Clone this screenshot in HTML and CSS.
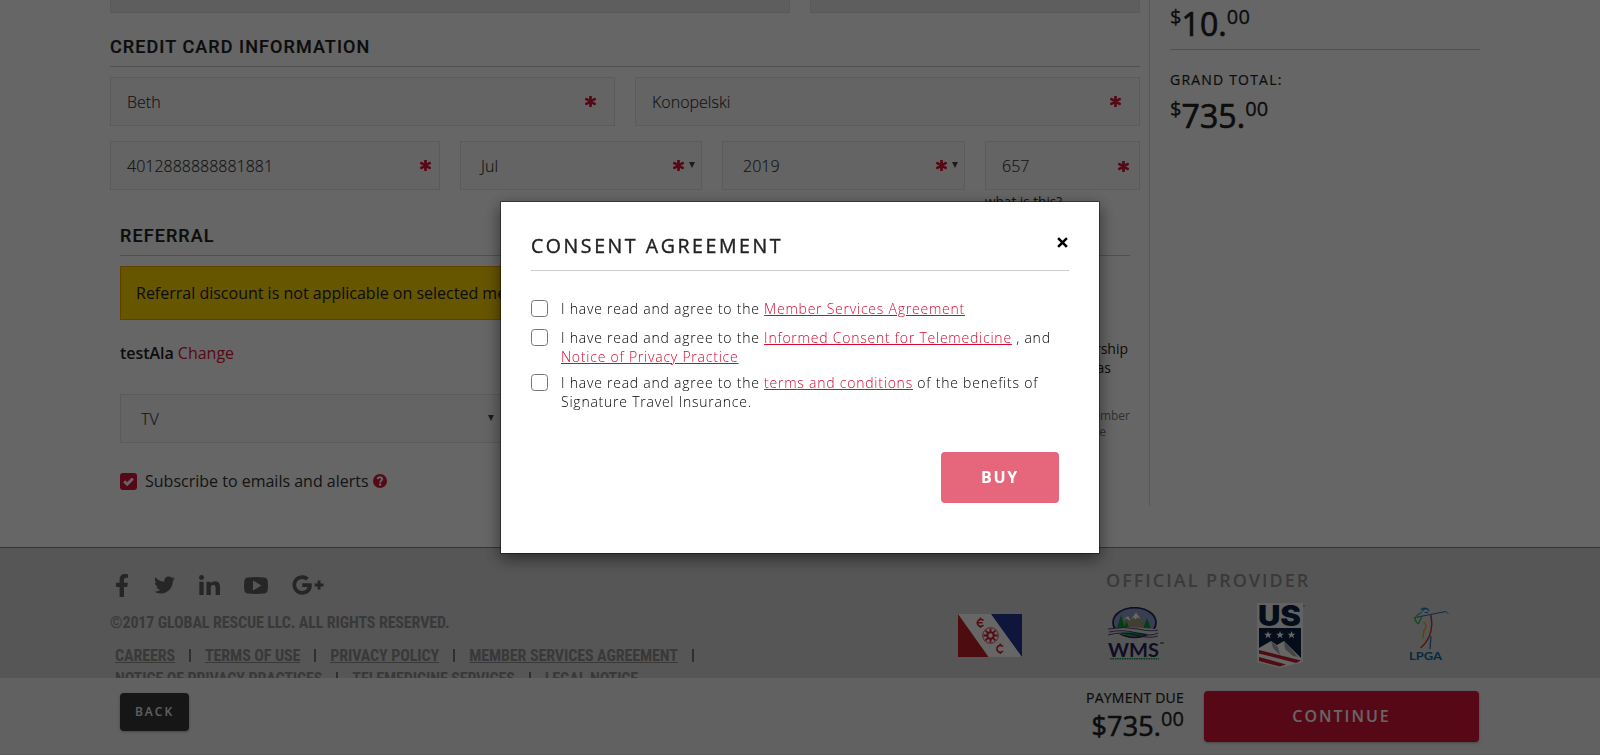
FILE: index.html
```html
<!DOCTYPE html>
<html lang="en">
<head>
<meta charset="utf-8">
<title>Checkout</title>
<link rel="stylesheet" href="styles.css">
</head>
<body>
<svg class="defs" aria-hidden="true">
  <symbol id="ast" viewBox="0 0 12 12"><path d="M6 .8v10.4M1.5 3.4l9 5.2M10.500 3.400l-9 5.200" stroke="currentColor" stroke-width="3" stroke-linecap="round" fill="none"/></symbol>
</svg>
<div class="page">
  <div class="content">
    <main class="main">
      <div class="locked"><div class="lock-a"></div><div class="lock-b"></div></div>
      <h2 class="heading">CREDIT CARD INFORMATION</h2>
      <div class="row names">
        <div class="field"><span>Beth</span><svg class="ast"><use href="#ast"/></svg></div>
        <div class="field"><span>Konopelski</span><svg class="ast"><use href="#ast"/></svg></div>
      </div>
      <div class="row card">
        <div class="field number"><span>4012888888881881</span><svg class="ast"><use href="#ast"/></svg></div>
        <div class="field select"><span>Jul</span><svg class="ast"><use href="#ast"/></svg><i class="arrow"></i></div>
        <div class="field select year"><span>2019</span><svg class="ast"><use href="#ast"/></svg><i class="arrow"></i></div>
        <div class="field cvv"><span>657</span><svg class="ast"><use href="#ast"/></svg></div>
      </div>
      <div class="hint">what is this?</div>
      <section class="referral">
        <h2 class="heading ref-head">REFERRAL</h2>
        <div class="ref-cols">
          <div class="ref-left">
            <div class="alert">Referral discount is not applicable on selected membership.</div>
            <div class="who"><b>testAla</b> <a>Change</a></div>
            <div class="field select source"><span>TV</span><i class="arrow"></i></div>
            <div class="subscribe">
              <svg class="tick" viewBox="0 0 17 17"><rect width="17" height="17" rx="3" fill="#d6153a"/><path d="M4.200 8.300l3 3 5.700-5.800" fill="none" stroke="#fff" stroke-width="2.900"/></svg>
              <span>Subscribe to emails and alerts</span>
              <svg class="help" viewBox="0 0 14 14"><circle cx="7" cy="7" r="7" fill="#d6153a"/><path d="M4.700 5.200C4.900 2.600 9.300 2.700 9.200 5.200 9.100 6.700 7.100 6.700 7.100 8.500" fill="none" stroke="#fff" stroke-width="2"/><rect x="6" y="9.500" width="2.200" height="2.200" fill="#fff"/></svg>
            </div>
          </div>
          <div class="ref-right">
            <p class="note"><span class="n1">membership</span><span class="n2">as</span></p>
            <p class="small"><span>member</span><span class="s2">the</span></p>
          </div>
        </div>
      </section>
    </main>
    <aside class="side">
      <div class="price"><sup>$</sup>10.<sup>00</sup></div>
      <div class="total-label">GRAND TOTAL:</div>
      <div class="price total"><sup>$</sup>735.<sup>00</sup></div>
    </aside>
  </div>
  <footer class="footer">
    <div class="foot-left">
      <div class="social">
        <svg class="fb" viewBox="22 0 275 512" preserveAspectRatio="none"><path d="M279.14 288l14.22-92.66h-88.91v-60.13c0-25.35 12.42-50.06 52.24-50.06h40.42V6.26S260.43 0 225.36 0c-73.22 0-121.08 44.38-121.08 124.72v70.62H22.89V288h81.39v224h100.17V288z"/></svg>
        <svg class="tw" viewBox="0 48 512 416"><path d="M459.37 151.716c.325 4.548.325 9.097.325 13.645 0 138.72-105.583 298.558-298.558 298.558-59.452 0-114.68-17.219-161.137-47.106 8.447.974 16.568 1.299 25.34 1.299 49.055 0 94.213-16.568 130.274-44.832-46.132-.975-84.792-31.188-98.112-72.772 6.498.974 12.995 1.624 19.818 1.624 9.421 0 18.843-1.300 27.614-3.573-48.081-9.747-84.143-51.980-84.143-102.985v-1.299c13.969 7.797 30.214 12.670 47.431 13.319-28.264-18.843-46.781-51.005-46.781-87.391 0-19.492 5.197-37.360 14.294-52.954 51.655 63.675 129.300 105.258 216.365 109.807-1.624-7.797-2.599-15.918-2.599-24.040 0-57.828 46.782-104.934 104.934-104.934 30.213 0 57.502 12.670 76.670 33.137 23.715-4.548 46.456-13.320 66.599-25.340-7.798 24.366-24.366 44.833-46.132 57.827 21.117-2.273 41.584-8.122 60.426-16.243-14.292 20.791-32.161 39.308-52.628 54.253z"/></svg>
        <svg class="li" viewBox="0 0 448 448" preserveAspectRatio="none"><path d="M100.28 448H7.4V148.9h92.88zM53.79 108.1C24.09 108.1 0 83.5 0 53.8a53.790 53.790 0 0 1 107.580 0c0 29.700-24.100 54.300-53.790 54.300zM447.9 448h-92.680V302.400c0-34.700-.7-79.200-48.290-79.200-48.290 0-55.690 37.700-55.690 76.700V448h-92.780V148.900h89.080v40.800h1.300c12.400-23.500 42.690-48.300 87.880-48.300 94 0 111.280 61.900 111.280 142.300V448z"/></svg>
        <svg class="yt" viewBox="0 0 24 17"><path fill-rule="evenodd" d="M4 .4Q12-.4 20 .4Q23.300.6 23.700 4Q24.200 8.500 23.700 13Q23.300 16.400 20 16.600Q12 17.400 4 16.600Q.7 16.400.3 13Q-.2 8.500.3 4Q.7.600 4 .400ZM9 3.500v10l8.300-5z"/></svg>
        <svg class="gp" viewBox="0 0 32 20"><path d="M10.200 8.300h9.400c1.200 6.300-2.700 11.500-9.400 11.500A9.800 9.800 0 1 1 16.900 2.800L14 5.600A5.900 5.900 0 1 0 10.200 15.900c3 0 4.800-1.700 5.400-4H10.200zM25.600 5.600h2.900v3h3v2.900h-3v3h-2.900v-3h-3V8.600h3z"/></svg>
      </div>
      <div class="copy">©2017 GLOBAL RESCUE LLC. ALL RIGHTS RESERVED.</div>
      <nav class="links">
        <div class="links-row"><a>CAREERS</a><i></i><a>TERMS OF USE</a><i></i><a>PRIVACY POLICY</a><i></i><a>MEMBER SERVICES AGREEMENT</a><i></i></div>
        <div class="links-row"><a>NOTICE OF PRIVACY PRACTICES</a><i></i><a>TELEMEDICINE SERVICES</a><i></i><a>LEGAL NOTICE</a></div>
      </nav>
    </div>
    <div class="foot-right">
      <div class="provider">OFFICIAL PROVIDER</div>
      <div class="logos">
        <svg class="flag" viewBox="0 0 64 43"><rect width="64" height="43" fill="#fff"/><path d="M0 0v43h30.500z" fill="#c01f28"/><path d="M33 0h31v43z" fill="#283593"/><g fill="none" stroke="#c8232f" stroke-width="1.600"><path d="M25.500 6.600a3.500 3.500 0 1 0 0 4.500M18.500 8.800h6M45 32.600a3.500 3.500 0 1 0 0 4.500M42.300 29.500v2M42.300 38v2M22.500 3.500v2M22.500 12v2"/><circle cx="32.500" cy="21.500" r="7.800" stroke-width=".8"/><circle cx="32.500" cy="21.500" r="3.200" stroke-width="2"/><path d="M32.500 14.500v3.500M32.500 25v3.500M25.500 21.500H29M36 21.500h3.500M27.600 16.600l2.500 2.500M34.900 23.900l2.500 2.500M37.400 16.600l-2.500 2.500M30.100 23.900l-2.500 2.500" stroke-width="1.800"/></g></svg>
        <svg class="wms" viewBox="0 0 56 54"><ellipse cx="26.500" cy="15.500" rx="21.500" ry="14.800" fill="#8f9dd0" stroke="#29235c" stroke-width="1.800"/><path d="M12 22l5-10 4-3 2 2 5-6 6 6 5 11z" fill="#a49b83"/><path d="M15 13l5-4 2.500 4 5.500-7.500 4.500 6-3-1-2 2-2-2-4 3-3-2z" fill="#fff"/><path d="M9 21l4-13 4 13zM35 22l4-11 4 11zM16 21l2.500-7 2.500 7z" fill="#0a9a3c"/><path d="M6 21q20-2 41 1v5q-21 3-41-1z" fill="#ddd"/><path d="M12 26q15-2 28 1-14 5-28-1" fill="#0a9a3c"/><path d="M0 22q16-3 30 0t20 1M1 25q14-3 28 1t21 0M0 28q15-4 28 0t22 1" fill="none" stroke="#29235c" stroke-width=".8"/><text x="0" y="49.500" textLength="51" lengthAdjust="spacingAndGlyphs" font-family="Lato" font-weight="700" font-size="18.500" fill="#29235c">WMS</text><path d="M52 36h4" stroke="#29235c"/><path d="M2 51.800h49" stroke="#0a9a3c" stroke-width="1.400" stroke-dasharray="1.600 .8"/></svg>
        <svg class="us" viewBox="0 0 48 65"><path d="M0 0h46v59l-23 6-23-6z" fill="#f6f6f6"/><text x="1" y="22.500" textLength="43" lengthAdjust="spacingAndGlyphs" font-family="Inter" font-weight="900" font-size="28" fill="#0b2240">US</text><path d="M2 25h42v32H2z" fill="#0b2240"/><g fill="#fff"><path id="star" d="M11 28l1 2.700h2.900l-2.300 1.800.9 2.800-2.500-1.700-2.500 1.700.9-2.800-2.300-1.800H10z"/><use href="#star" x="12"/><use href="#star" x="23.500"/><path d="M2 45l12-7 6 4 7-4 17 17v4l-21 5-21-5z"/></g><path d="M14 38l2 7 7 7-2-8zM27 38l1 8 8 7 5 1z" fill="#aaa"/><path d="M2 47l42 10.500-5 2.500L2 50.500zM2 54l27 7.500-6 2L2 58z" fill="#c6202e"/><circle cx="47" cy="3" r=".7" fill="#666"/></svg>
        <svg class="lpga" viewBox="0 0 40 54"><g fill="none" stroke-linecap="round"><path d="M13.500 4.500q3-4 6-1M12 3q5-3 8 1M16 6h3" stroke="#1b75bc" stroke-width="1.200"/><path d="M6 11L37 5l2 2" stroke="#1b6ca8" stroke-width="1"/><path d="M5.500 11q2 6 4 6l3-6M8 9l4-3" stroke="#39b54a" stroke-width="1.500"/><path d="M15 16q4 3 0 8l-1 7" stroke="#e5aa1a" stroke-width="1.500"/><path d="M22 9q3 17-6 28l-4 4" stroke="#d5322d" stroke-width="1.500"/><path d="M22 30l-1 12" stroke="#1b75bc" stroke-width="1.300"/></g><text x="0" y="53.500" textLength="33" lengthAdjust="spacingAndGlyphs" font-family="Lato" font-size="10.500" font-weight="700" fill="#12699f">LPGA</text></svg>
      </div>
    </div>
  </footer>
</div>

<div class="bar">
  <a class="back">BACK</a>
  <div class="due"><div class="due-label">PAYMENT DUE</div><div class="due-sum">$735.<sup>00</sup></div></div>
  <a class="continue">CONTINUE</a>
</div>

<div class="overlay">
  <div class="modal">
    <div class="modal-head"><span>CONSENT AGREEMENT</span><svg class="close" viewBox="0 0 10 10"><path d="M1 1l8 8M9 1L1 9" stroke="#000" stroke-width="2.300"/></svg></div>
    <div class="agree"><i class="box"></i><p>I have read and agree to the <a>Member Services Agreement</a></p></div>
    <div class="agree"><i class="box"></i><p>I have read and agree to the <a>Informed Consent for Telemedicine</a> , and<br><a>Notice of Privacy Practice</a></p></div>
    <div class="agree"><i class="box"></i><p>I have read and agree to the <a>terms and conditions</a> of the benefits of<br>Signature Travel Insurance.</p></div>
    <div class="actions"><a class="buy">BUY</a></div>
  </div>
</div>
</body>
</html>
```
FILE: styles.css
```css
* { box-sizing: border-box; }
html, body { margin: 0; height: 100%; overflow: hidden; }
body { font-family: "Open Sans", sans-serif; font-size: 16px; color: #222; background: #fff; }
h2, p { margin: 0; }
i { font-style: normal; }
.defs { display: block; width: 0; height: 0; }

.page { height: 755px; overflow: hidden; display: flex; flex-direction: column; }
.content { display: flex; height: 547px; padding-left: 110px; flex: none; }
.main { width: 1030px; }

.locked { display: flex; gap: 20px; height: 13px; }
.lock-a, .lock-b { background: #ececec; border: 1px solid #e0e0e0; border-top: 0; }
.lock-a { width: 680px; }
.lock-b { width: 330px; }

.heading { font: 500 18px/39px Roboto, sans-serif; letter-spacing: 1.08px; color: #222; -webkit-text-stroke: .2px; border-bottom: 1px solid #c9c9c9; margin-top: 14px; }

.row { display: flex; gap: 20px; }
.names { margin-top: 10px; }
.names .field { flex: 1; padding-right: 18px; }
.card { margin-top: 15px; }
.field { display: flex; align-items: center; height: 49px; border: 1px solid #e3e3e3; background: #fafafa; padding: 0 16px; font-weight: 300; color: #333; -webkit-text-stroke: .15px; }
.field span { flex: 1; }
.ast { width: 11px; height: 11px; color: #d6153a; }
.number { width: 330px; padding-right: 8px; }
.select { width: 242px; padding: 0 6px 0 20px; }
.year { width: 243px; }
.select .ast { margin-right: 5px; }
.cvv { width: 155px; padding-right: 10px; }
.cvv .ast { margin-top: 2px; }
.number .ast, .select .ast, .names .ast { margin-top: -1px; }
.arrow { border: 3.500px solid transparent; border-top: 6px solid #444; border-bottom: 0; margin-top: -2px; }
.hint { margin-left: 875px; font-size: 13.600px; line-height: 20px; height: 27px; padding-top: 2px; color: #333; }

.referral { padding: 0 10px; }
.ref-head { margin-top: 0; line-height: 38px; }
.ref-cols { display: flex; margin-top: 10px; }
.ref-left { width: 382px; }
.alert { width: 500px; height: 54px; line-height: 52px; padding-left: 15px; background: #ffd600; border: 1px solid #f0a500; white-space: nowrap; color: #222; }
.who { margin-top: 22px; line-height: 22px; height: 52px; }
.who b { font-weight: 600; letter-spacing: -.05px; }
.who a { color: #d6153a; }
.source { width: 382px; padding-right: 7px; }
.subscribe { display: flex; align-items: center; height: 22px; margin-top: 27px; color: #333; }
.subscribe span { margin: 0 4px 0 8px; }
.tick { width: 17px; height: 17px; }
.help { width: 14px; height: 14px; }
.ref-right { flex: 1; text-align: right; padding-top: 73px; }
.note span, .small span { display: block; }
.note { font-size: 14px; line-height: 19px; }
.n1 { margin-right: 2px; }
.n2 { margin-right: 19px; }
.small { font-size: 12px; line-height: 16px; color: #777; margin-top: 31px; }
.s2 { margin-right: 24px; }

.side { margin-left: 9px; width: 331px; height: 506px; padding-left: 20px; border-left: 1px solid #ddd; }
.price { height: 50px; line-height: 48px; font-size: 32px; letter-spacing: .1px; -webkit-text-stroke: .7px; border-bottom: 1px solid #c9c9c9; }
.side sup, .due sup { font-size: 20px; line-height: 0; vertical-align: 12px; -webkit-text-stroke: .3px; }
.total-label { margin-top: 20px; font-size: 14px; line-height: 20px; letter-spacing: 1.200px; -webkit-text-stroke: .2px; }
.total { border: 0; margin-top: 2px; }

.footer { flex: none; display: flex; height: 208px; border-top: 1px solid #858585; background: #d7d7d7; color: #8f8f8f; }
.foot-left { flex: none; width: 958px; padding: 24px 0 0 110px; }
.social { display: flex; align-items: center; height: 26px; padding-left: 6px; fill: #5f5f5f; }
.fb { width: 12px; height: 23px; }
.tw { width: 21px; height: 18px; margin-left: 26px; }
.li { width: 21px; height: 20px; margin-left: 24px; }
.yt { width: 24px; height: 17px; margin-left: 24px; }
.gp { width: 32px; height: 20px; margin-left: 24px; }
.copy, .links { font-family: "Roboto Condensed", Roboto, sans-serif; font-stretch: 75%; font-weight: 700; font-size: 16px; letter-spacing: -.13px; white-space: nowrap; }
.copy { line-height: 24px; margin-top: 13px; }
.links { padding: 9px 0 0 5px; letter-spacing: -.1px; }
.links-row { display: flex; align-items: center; line-height: 23px; }
.links a { text-decoration: underline; }
.links i { width: 2px; height: 13px; margin: 0 14px; background: #777; }
.foot-right { padding-top: 19px; }
.provider { margin-left: 148px; font-size: 18px; font-weight: 600; line-height: 26px; letter-spacing: 2px; white-space: nowrap; }
.logos { display: flex; align-items: flex-start; padding-top: 10px; }
.flag { width: 64px; height: 43px; margin-top: 11px; }
.wms { width: 56px; height: 54px; margin: 4px 0 0 86px; }
.us { width: 48px; height: 65px; margin-left: 93px; }
.lpga { width: 40px; height: 55px; margin: 3px 0 0 104px; }

.bar { position: fixed; left: 0; right: 0; bottom: 0; height: 77px; background: #f3f3f3; border-bottom: 1px solid #dcdcdc; display: flex; padding: 0 121px 0 120px; }
.back { width: 69px; height: 38px; margin-top: 15px; border-radius: 4px; background: #383838; color: #eee; font-size: 12px; font-weight: 600; letter-spacing: 2px; line-height: 37px; text-align: center; box-shadow: 0 1px 3px rgba(0,0,0,.3); }
.due { margin-left: auto; text-align: right; padding: 10px 20px 0 0; }
.due-label { font-size: 14px; line-height: 20px; letter-spacing: .22px; -webkit-text-stroke: .2px; }
.due-sum { font-size: 27px; line-height: 36px; letter-spacing: .1px; -webkit-text-stroke: .6px; }
.due sup { vertical-align: 10px; }
.continue { width: 275px; height: 51px; margin-top: 13px; border-radius: 4px; background: #d6153a; color: #fff; font-weight: 600; letter-spacing: 2px; line-height: 50px; text-align: center; box-shadow: 0 1px 3px rgba(0,0,0,.3); }

.overlay { position: fixed; inset: 0; background: rgba(0,0,0,.6); display: flex; justify-content: center; align-items: flex-start; padding-top: 201px; }
.modal { width: 600px; height: 353px; padding: 19px 30px; background: #fff; background-clip: padding-box; border: 1px solid rgba(0,0,0,.4); box-shadow: 0 5px 15px rgba(0,0,0,.5); }
.modal-head { display: flex; justify-content: space-between; height: 50px; border-bottom: 1px solid #ccc; font-size: 19.500px; letter-spacing: 2.580px; -webkit-text-stroke: .4px; line-height: 50px; margin-bottom: 27px; }
.close { width: 11px; height: 11px; margin: 16px 1px 0 0; }
.agree { display: flex; gap: 13px; font-size: 14px; font-weight: 300; letter-spacing: .77px; line-height: 19px; color: #000; }
.agree + .agree { margin-top: 9px; }
.agree + .agree + .agree { margin-top: 6px; }
.agree p { white-space: nowrap; padding-top: 1px; }
.agree a { color: #d60a30; text-decoration: underline; }
.box { width: 17px; height: 17px; flex: none; margin-top: 2px; border: 1px solid #767676; border-radius: 3.500px; }
.actions { display: flex; justify-content: flex-end; padding: 41px 10px 0 0; }
.buy { width: 118px; height: 51px; border-radius: 4px; background: #e6677c; color: #fff; font-weight: 700; letter-spacing: 1.800px; line-height: 50px; text-align: center; }
```
